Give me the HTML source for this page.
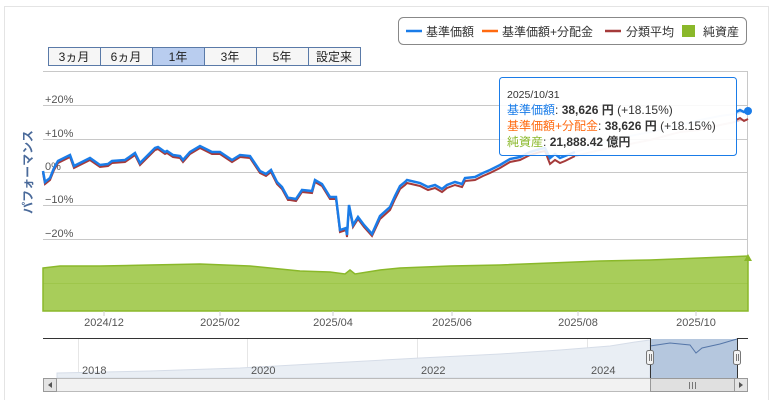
<!DOCTYPE html>
<html><head><meta charset="utf-8"><style>
body{margin:0;width:774px;height:400px;background:#fff;overflow:hidden;font-family:"Liberation Sans","Noto Sans CJK JP",sans-serif}
svg text{font-family:"Liberation Sans","Noto Sans CJK JP",sans-serif}
</style></head><body>
<svg width="774" height="400" viewBox="0 0 774 400" xmlns="http://www.w3.org/2000/svg">
<rect x="4.5" y="6.5" width="764" height="400" fill="#fff" stroke="#e4e4e4"/>
<!-- legend -->
<rect x="398.5" y="17.5" width="348" height="27" rx="5" fill="#fff" stroke="#888"/>
<line x1="406" y1="31" x2="422" y2="31" stroke="#1a7ce8" stroke-width="2.5"/>
<text x="426" y="36" font-size="12" fill="#333">基準価額</text>
<line x1="482" y1="31" x2="498" y2="31" stroke="#ff6a10" stroke-width="2.5"/>
<text x="502" y="36" font-size="12" fill="#333">基準価額+分配金</text>
<line x1="605" y1="31" x2="621" y2="31" stroke="#a53a3a" stroke-width="2.5"/>
<text x="626" y="36" font-size="12" fill="#333">分類平均</text>
<rect x="682" y="25" width="13" height="12" fill="#8ab82a"/>
<text x="703" y="36" font-size="12" fill="#333">純資産</text>
<!-- range buttons -->
<g font-size="12" fill="#222" text-anchor="middle">
<rect x="48.5" y="47.5" width="52" height="18" fill="#f6f6f6" stroke="#5a7aa8"/><text x="74" y="61">3ヵ月</text>
<rect x="100.5" y="47.5" width="52" height="18" fill="#f6f6f6" stroke="#5a7aa8"/><text x="126" y="61">6ヵ月</text>
<rect x="152.5" y="47.5" width="52" height="18" fill="#b9cdef" stroke="#5a7aa8"/><text x="178" y="61">1年</text>
<rect x="204.5" y="47.5" width="52" height="18" fill="#f6f6f6" stroke="#5a7aa8"/><text x="230" y="61">3年</text>
<rect x="256.5" y="47.5" width="52" height="18" fill="#f6f6f6" stroke="#5a7aa8"/><text x="282" y="61">5年</text>
<rect x="308.5" y="47.5" width="52" height="18" fill="#f6f6f6" stroke="#5a7aa8"/><text x="334" y="61">設定来</text>
</g>
<!-- grid -->
<g stroke="#c8c8c8" stroke-width="1">
<line x1="43" y1="71.5" x2="748" y2="71.5"/>
<line x1="43" y1="105.5" x2="748" y2="105.5"/>
<line x1="43" y1="139.5" x2="748" y2="139.5"/>
<line x1="43" y1="172.5" x2="748" y2="172.5"/>
<line x1="43" y1="205.5" x2="748" y2="205.5"/>
<line x1="43" y1="239.5" x2="748" y2="239.5"/>
<line x1="747.5" y1="71" x2="747.5" y2="311"/>
</g>
<g font-size="11" fill="#555">
<text x="45" y="103">+20%</text><text x="45" y="137">+10%</text><text x="45" y="170">0%</text>
<text x="45" y="203">−10%</text><text x="45" y="237">−20%</text>
</g>
<text transform="translate(32,172) rotate(-90)" text-anchor="middle" font-size="12" font-weight="bold" fill="#4a6a9a">パフォーマンス</text>
<!-- lines -->
<polyline fill="none" stroke="#a53a3a" stroke-width="2" points="43,173 45,184 50,180 54,170 58,163 70,157 74,168 90,160 100,167 108,166 112,163 125,162 135,155 140,165 147,158 155,150 158,149 165,154 167,153 173,157 180,158 183,162 190,154 200,148 208,152 212,154 220,154 232,162 240,157 250,158 260,173 266,176 271,172 277,184 282,189 288,200 290,200 296,201 302,192 312,193 315,182 322,186 330,199 336,199 340,232 346,230 347,237 349,207 353,227 358,219 364,227 372,236 380,219 390,210 395,199 400,189 405,185 407,183 420,186 428,190 435,188 442,192 447,188 455,185 462,187 465,181 475,180 483,176 490,173 500,168 510,162 520,160 530,155 540,152 545,151 550,164 555,160 560,163 565,161 575,156"/>
<polyline fill="none" stroke="#1a7ce8" stroke-width="2.5" points="43,171 45,182 50,178 54,168 58,161 70,155 74,166 90,158 100,165 108,164 112,161 125,160 135,153 140,163 147,156 155,148 158,147 165,152 167,151 173,155 180,156 183,160 190,152 200,146 208,150 212,152 220,152 232,160 240,155 250,156 260,171 266,174 271,170 277,182 282,187 288,198 290,198 296,199 302,190 312,191 315,180 322,184 330,197 336,197 340,230 346,228 347,235 349,205 353,225 358,217 364,225 372,234 380,216 390,207 395,196 400,186 405,182 407,180 420,183 428,187 435,185 442,189 447,185 455,182 462,184 465,178 475,177 483,173 490,170 500,165 510,159 520,157 530,152 540,149 545,148 550,158 555,154 560,158 565,156 575,152"/>
<polyline fill="none" stroke="#e6c8c8" stroke-width="2" points="575,156 600,150 620,146 650,140 680,132 700,130 720,125 735,122 740,120 748,120"/>
<polyline fill="none" stroke="#d2e4f8" stroke-width="2" points="575,152 600,144 620,138 650,132 680,125 700,120 720,116 735,114 740,112 748,111"/>
<polyline fill="none" stroke="#a53a3a" stroke-width="2" points="736,120 740,118 744,121 748,119"/>
<polyline fill="none" stroke="#1a7ce8" stroke-width="2.5" points="736,112 740,110 744,112 748,111"/>
<circle cx="748" cy="111" r="4" fill="#1a7ce8"/>
<!-- net assets area -->
<path d="M43,268 L60,266 L100,266 L150,265 L200,264 L250,266 L300,271 L330,272 L345,274 L350,270 L355,274 L380,270 L400,268 L450,266 L500,265 L550,263 L600,261 L650,260 L700,258 L748,256 L748,311 L43,311Z" fill="#a8cd5a" stroke="#8ab82a" stroke-width="1.5"/>
<line x1="43" y1="283.5" x2="748" y2="283.5" stroke="#8ab82a" stroke-width="0.6" opacity="0.6"/>
<path d="M744,261 L748,254 L752,261Z" fill="#8ab82a"/>
<!-- x axis -->
<g stroke="#ccc"><line x1="104" y1="311" x2="104" y2="316"/><line x1="220" y1="311" x2="220" y2="316"/><line x1="333" y1="311" x2="333" y2="316"/><line x1="452" y1="311" x2="452" y2="316"/><line x1="578" y1="311" x2="578" y2="316"/><line x1="696" y1="311" x2="696" y2="316"/></g>
<g font-size="11" fill="#555" text-anchor="middle">
<text x="104" y="326">2024/12</text><text x="220" y="326">2025/02</text><text x="333" y="326">2025/04</text>
<text x="452" y="326">2025/06</text><text x="578" y="326">2025/08</text><text x="696" y="326">2025/10</text>
</g>
<!-- navigator -->
<g stroke="#e6e6e6"><line x1="78.5" y1="339" x2="78.5" y2="378"/><line x1="247.5" y1="339" x2="247.5" y2="378"/><line x1="417.5" y1="339" x2="417.5" y2="378"/><line x1="587.5" y1="339" x2="587.5" y2="378"/></g>
<path d="M57,375 L57,373 L150,371 L240,368 L330,363 L420,358 L500,354 L560,350 L610,346 L635,342 L650,340 L650,378 L57,378Z" fill="#e9eef4" stroke="#d6dde8"/>
<rect x="650" y="339" width="87" height="39" fill="#b5c7de"/>
<path d="M650,346 L670,343 L690,345 L696,353 L702,348 L720,344 L737,339" fill="none" stroke="#5576a8" stroke-width="1"/>
<g font-size="11" fill="#555"><text x="82" y="374">2018</text><text x="251" y="374">2020</text><text x="421" y="374">2022</text><text x="591" y="374">2024</text></g>
<path d="M43,338.5 H650.5 V378 M737.5,378 V338.5 H748" fill="none" stroke="#333" stroke-width="1"/>
<rect x="646.5" y="350.5" width="7" height="14" rx="2" fill="#f2f2f2" stroke="#777"/>
<line x1="649.5" y1="354" x2="649.5" y2="361" stroke="#777"/><line x1="651.5" y1="354" x2="651.5" y2="361" stroke="#777"/>
<rect x="733.5" y="350.5" width="7" height="14" rx="2" fill="#f2f2f2" stroke="#777"/>
<line x1="736.5" y1="354" x2="736.5" y2="361" stroke="#777"/><line x1="738.5" y1="354" x2="738.5" y2="361" stroke="#777"/>
<!-- scrollbar -->
<rect x="43.5" y="378.5" width="704" height="13" fill="#f2f2f2" stroke="#bbb"/>
<rect x="43.5" y="378.5" width="13" height="13" fill="#e4e4e4" stroke="#999"/>
<path d="M52,382 L48,385 L52,388Z" fill="#555"/>
<rect x="734.5" y="378.5" width="13" height="13" fill="#e4e4e4" stroke="#999"/>
<path d="M739,382 L743,385 L739,388Z" fill="#555"/>
<rect x="650.5" y="378.5" width="84" height="13" fill="#e0e0e0" stroke="#999"/>
<g stroke="#777"><line x1="689.5" y1="382" x2="689.5" y2="389"/><line x1="692.5" y1="382" x2="692.5" y2="389"/><line x1="695.5" y1="382" x2="695.5" y2="389"/></g>
<!-- tooltip -->
<rect x="499.5" y="77.5" width="237" height="78" rx="3" fill="#fff" fill-opacity="0.88" stroke="#1a7ce8"/>
<text x="507" y="98" font-size="10.5" fill="#333">2025/10/31</text>
<text x="507" y="114" font-size="12" fill="#333"><tspan fill="#1a7ce8">基準価額</tspan>: <tspan font-weight="bold">38,626 円</tspan> (+18.15%)</text>
<text x="507" y="130" font-size="12" fill="#333"><tspan fill="#ff6a10">基準価額+分配金</tspan>: <tspan font-weight="bold">38,626 円</tspan> (+18.15%)</text>
<text x="507" y="146" font-size="12" fill="#333"><tspan fill="#8ab82a">純資産</tspan>: <tspan font-weight="bold">21,888.42 億円</tspan></text>
</svg>
</body></html>
